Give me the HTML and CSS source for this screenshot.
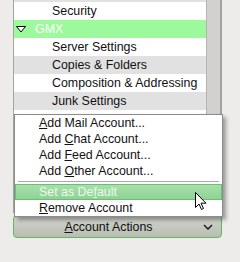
FILE: index.html
```html
<!DOCTYPE html>
<html lang="en">
<head>
    <meta charset="UTF-8">
    <title>Account Settings</title>
    <link rel="stylesheet" href="styles.css">
</head>
<body>
    <div class="main">
        <div class="tree">
            <div class="row alt first"></div>
            <div class="row child">Security</div>
            <div class="row account">
                <svg class="twisty" width="10" height="7" viewBox="0 0 10 7"><path d="M0.5 0.5 L9.5 0.5 L5 6 Z" fill="#fff" stroke="#000" stroke-width="1"/></svg>
                <span>GMX</span>
            </div>
            <div class="row child">Server Settings</div>
            <div class="row child alt">Copies &amp; Folders</div>
            <div class="row child">Composition &amp; Addressing</div>
            <div class="row child alt">Junk Settings</div>
            <div class="row child">Synchronization &amp; Storage</div>
        </div>
        <div class="scroll"></div>
    </div>

    <button class="actions">
        <span class="label"><u>A</u>ccount Actions</span>
        <svg class="chevron" width="10" height="6" viewBox="0 0 10 6"><path d="M1 1 L5 5 L9 1" fill="none" stroke="#222" stroke-width="1.6"/></svg>
    </button>

    <div class="menu">
        <div class="item"><u>A</u>dd Mail Account...</div>
        <div class="item">Add <u>C</u>hat Account...</div>
        <div class="item">Add <u>F</u>eed Account...</div>
        <div class="item">Add <u>O</u>ther Account...</div>
        <div class="sep"></div>
        <div class="item active">Set as De<u>f</u>ault</div>
        <div class="item"><u>R</u>emove Account</div>
    </div>

    <svg class="cursor" width="12" height="19" viewBox="0 0 12 19"><path d="M0.5 0.5 L0.5 15.5 L4 12 L6.5 17.5 L8.5 16.5 L6 11.2 L11 11.2 Z" fill="#fff" stroke="#000" stroke-width="1" stroke-linejoin="round"/></svg>
</body>
</html>
```

FILE: styles.css
```css
body {
    margin: 0;
    background-color: #edecea;
    font-family: 'Liberation Sans', Arial, sans-serif;
    font-size: 12.4px;
    color: #111;
    width: 240px;
    height: 262px;
    overflow: hidden;
    position: relative;
}
.main {
    display: flex;
    padding-left: 13px;
    height: 213px;
    margin-bottom: 2px;
}
.tree {
    width: 192px;
    background: #fff;
    border-left: 1px solid #a4a4a4;
    border-right: 1px solid #b4b4b4;
    overflow: hidden;
}
.row {
    height: 18px;
    line-height: 18px;
    white-space: nowrap;
}
.row.first {
    margin-top: -16px;
}
.alt {
    background: #e1e1e1;
}
.child {
    padding-left: 38px;
}
.account {
    background: #9cfa9c;
    color: #fff;
    display: flex;
    align-items: center;
    padding-left: 2px;
}
.twisty {
    margin-right: 9px;
}
.scroll {
    width: 13px;
    background: #d3d1cf;
    border-right: 2px solid #a4a2a0;
}
.actions {
    display: flex;
    align-items: center;
    margin-left: 13px;
    width: 209px;
    height: 23px;
    padding: 0 8px 0 0;
    border: 1px solid #5fb862;
    border-radius: 4px;
    background: linear-gradient(#d3d6ce, #b8bcb3);
    font-family: inherit;
    font-size: 12.4px;
    color: #111;
}
.actions .label {
    flex: 1;
    text-align: center;
}
.menu {
    position: absolute;
    left: 14px;
    top: 114px;
    width: 207px;
    background: #fff;
    border: 1px solid #8c8c8c;
    box-shadow: 3px 3px 4px rgba(0, 0, 0, 0.35);
}
.item {
    height: 16px;
    line-height: 16px;
    padding-left: 24px;
    white-space: nowrap;
}
.sep {
    height: 1px;
    margin: 2px 3px 2px 3px;
    background: #a8a8a8;
}
.item.active {
    background: linear-gradient(#a6e2ab, #8ed195);
    box-shadow: inset 0 0 0 1px #6dbe74;
    color: #eef8ee;
}
.cursor {
    position: absolute;
    left: 195px;
    top: 192px;
}
```
